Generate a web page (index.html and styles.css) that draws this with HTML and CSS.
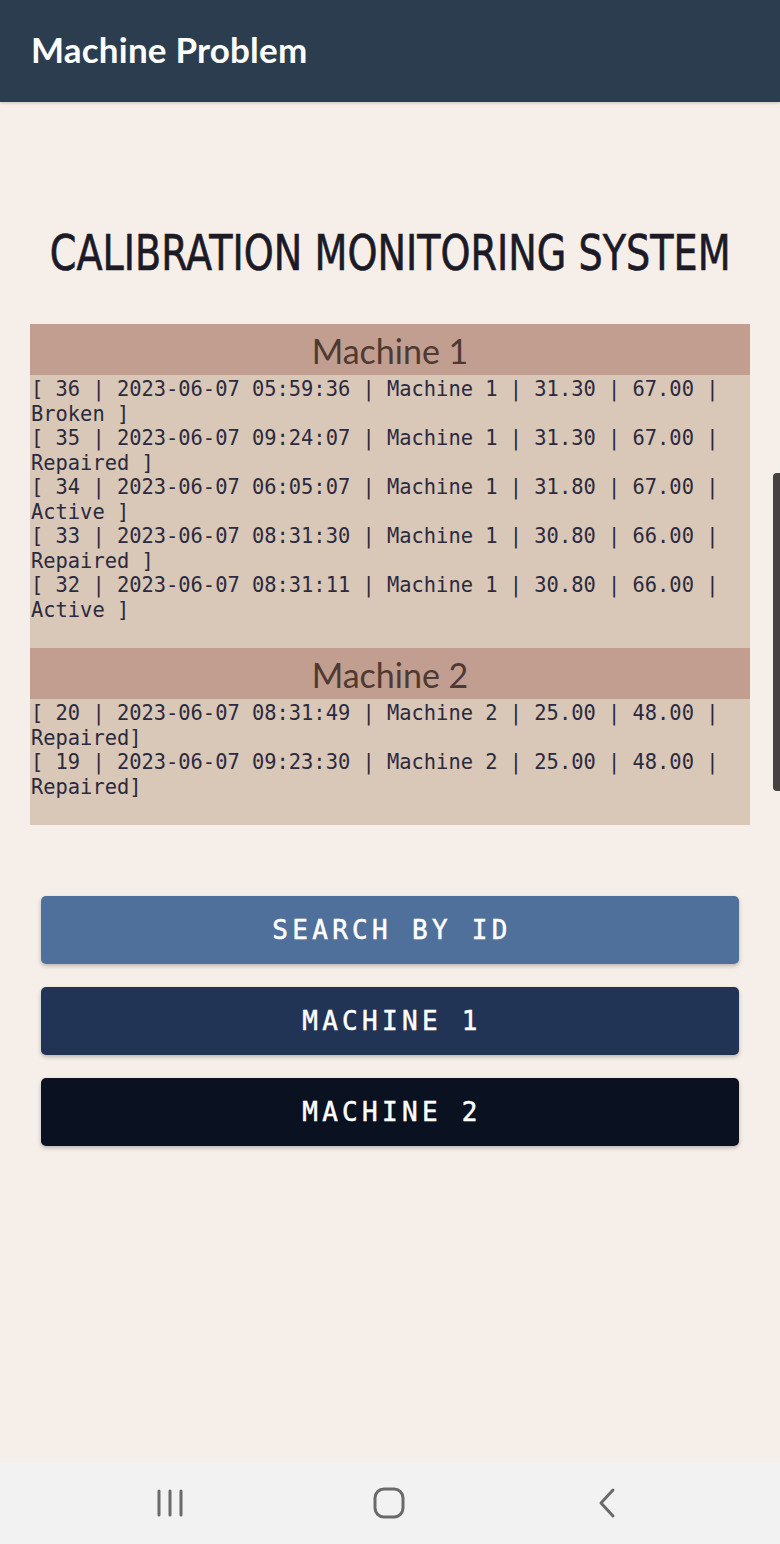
FILE: index.html
```html
<!DOCTYPE html>
<html>
<head>
<meta charset="utf-8">
<link rel="stylesheet" href="styles.css">
</head>
<body>
<div class="app">
  <header class="appbar"><span class="appbar-title">Machine Problem</span></header>
  <main class="content">
    <h1 class="heading">CALIBRATION MONITORING SYSTEM</h1>
    <section class="panel">
      <div class="group">
        <h2 class="group-title">Machine 1</h2>
        <div class="rows">[ 36 | 2023-06-07 05:59:36 | Machine 1 | 31.30 | 67.00 | Broken ]<br>[ 35 | 2023-06-07 09:24:07 | Machine 1 | 31.30 | 67.00 | Repaired ]<br>[ 34 | 2023-06-07 06:05:07 | Machine 1 | 31.80 | 67.00 | Active ]<br>[ 33 | 2023-06-07 08:31:30 | Machine 1 | 30.80 | 66.00 | Repaired ]<br>[ 32 | 2023-06-07 08:31:11 | Machine 1 | 30.80 | 66.00 | Active ]</div>
      </div>
      <div class="group">
        <h2 class="group-title">Machine 2</h2>
        <div class="rows">[ 20 | 2023-06-07 08:31:49 | Machine 2 | 25.00 | 48.00 | Repaired]<br>[ 19 | 2023-06-07 09:23:30 | Machine 2 | 25.00 | 48.00 | Repaired]</div>
      </div>
    </section>
    <div class="actions">
      <button class="btn btn-search">SEARCH BY ID</button>
      <button class="btn btn-m1">MACHINE 1</button>
      <button class="btn btn-m2">MACHINE 2</button>
    </div>
  </main>
  <nav class="navbar">
    <svg class="nav-icon" width="40" height="40" viewBox="0 0 40 40"><g stroke="#6a6a6a" stroke-width="3" stroke-linecap="round"><line x1="9" y1="8" x2="9" y2="32"/><line x1="20" y1="8" x2="20" y2="32"/><line x1="31" y1="8" x2="31" y2="32"/></g></svg>
    <svg class="nav-icon" width="40" height="40" viewBox="0 0 40 40"><rect x="6" y="6" width="28" height="28" rx="9" fill="none" stroke="#6a6a6a" stroke-width="3"/></svg>
    <svg class="nav-icon" width="40" height="40" viewBox="0 0 40 40"><polyline points="26,7 14,20 26,33" fill="none" stroke="#6a6a6a" stroke-width="3" stroke-linecap="round" stroke-linejoin="round"/></svg>
  </nav>
  <div class="scroll-thumb"></div>
</div>
</body>
</html>
```

FILE: styles.css
```css
* { box-sizing: border-box; }
html, body { margin: 0; padding: 0; }
body { background: #f6efe9; }
.app {
  position: relative;
  height: 1544px;
  display: flex;
  flex-direction: column;
  overflow: hidden;
}
.appbar {
  height: 102px;
  background: #2c3d4f;
  display: flex;
  align-items: center;
  padding-left: 31px;
  box-shadow: 0 1px 3px rgba(0,0,0,0.2);
}
.appbar-title {
  color: #ffffff;
  font-family: "Comic Sans MS", "Lato", sans-serif;
  font-size: 35px;
  font-weight: 700;
  letter-spacing: 0.2px;
  margin-top: -4px;
}
.content {
  flex: 1;
  display: flex;
  flex-direction: column;
}
.heading {
  align-self: center;
  width: max-content;
  margin: 123px 0 43px 0;
  text-align: center;
  font-family: "DejaVu Sans", sans-serif;
  font-weight: 400;
  font-size: 50px;
  line-height: 56px;
  color: #1c1a26;
  white-space: nowrap;
  transform: scaleX(0.763);
  -webkit-text-stroke: 0.7px #1c1a26;
}
.panel {
  margin: 0 30px;
  background: #d9c7b8;
}
.group-title {
  margin: 0;
  height: 51px;
  background: #c19e8f;
  text-align: center;
  font-family: "Comic Sans MS", "Lato", sans-serif;
  font-weight: 400;
  font-size: 34px;
  line-height: 53px;
  color: #4f3a33;
}
.rows {
  font-family: "DejaVu Sans Mono", monospace;
  font-size: 20.4px;
  line-height: 24.5px;
  color: #2b2a3e;
  padding: 2px 0 26px 1px;
}
.actions {
  margin: 71px 41px 0 41px;
  display: flex;
  flex-direction: column;
  gap: 23px;
}
.btn {
  height: 68px;
  border: none;
  border-radius: 5px;
  color: #ffffff;
  font-family: "DejaVu Sans Mono", monospace;
  font-size: 26px;
  letter-spacing: 4.3px;
  box-shadow: 0 2px 4px rgba(0,0,0,0.25);
  padding: 0 0 0 4px;
  -webkit-text-stroke: 0.5px #ffffff;
}
.btn-search { background: #4f709b; }
.btn-m1 { background: #213455; }
.btn-m2 { background: #0a1120; }
.navbar {
  height: 82px;
  background: #f2f2f2;
  display: flex;
  align-items: center;
  justify-content: space-between;
  padding: 0 153px 0 150px;
}
.scroll-thumb {
  position: absolute;
  right: 0;
  top: 473px;
  width: 7px;
  height: 318px;
  background: #454141;
  border-radius: 4px 0 0 4px;
}
```
